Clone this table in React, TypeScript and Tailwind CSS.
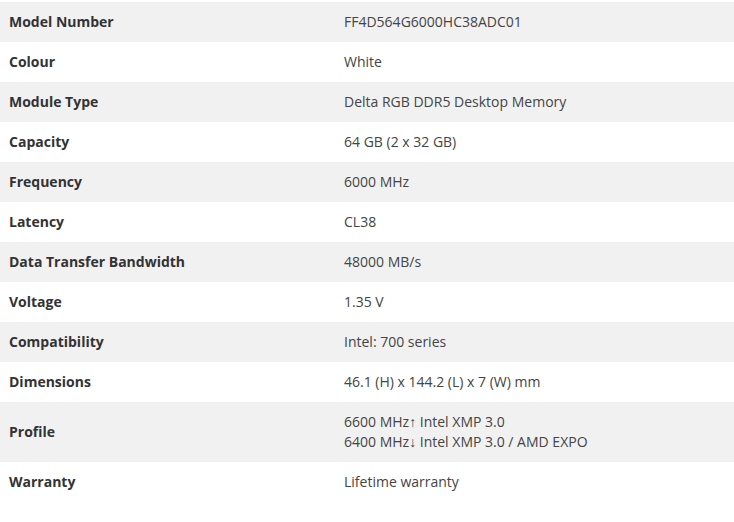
const specs: { label: string; value: string[] }[] = [
  { label: 'Model Number', value: ['FF4D564G6000HC38ADC01'] },
  { label: 'Colour', value: ['White'] },
  { label: 'Module Type', value: ['Delta RGB DDR5 Desktop Memory'] },
  { label: 'Capacity', value: ['64 GB (2 x 32 GB)'] },
  { label: 'Frequency', value: ['6000 MHz'] },
  { label: 'Latency', value: ['CL38'] },
  { label: 'Data Transfer Bandwidth', value: ['48000 MB/s'] },
  { label: 'Voltage', value: ['1.35 V'] },
  { label: 'Compatibility', value: ['Intel: 700 series'] },
  { label: 'Dimensions', value: ['46.1 (H) x 144.2 (L) x 7 (W) mm'] },
  { label: 'Profile', value: ['6600 MHz↑ Intel XMP 3.0', '6400 MHz↓ Intel XMP 3.0 / AMD EXPO'] },
  { label: 'Warranty', value: ['Lifetime warranty'] },
]

export default function App() {
  return (
    <div className="w-[734px] h-[522px] bg-white pt-[2px] font-['Open_Sans',sans-serif] text-[14px] leading-[20px]">
      <table className="w-full border-collapse">
        <tbody>
          {specs.map((row, i) => (
            <tr key={row.label} className={i % 2 === 0 ? 'bg-[#f1f1f1]' : 'bg-white'}>
              <td className="w-[335px] pl-[9px] py-[10px] font-bold text-[#333333] align-middle">
                {row.label}
              </td>
              <td className="pl-[9px] py-[10px] text-[#444444] align-middle">
                {row.value.map(v => (
                  <div key={v}>{v}</div>
                ))}
              </td>
            </tr>
          ))}
        </tbody>
      </table>
    </div>
  )
}
